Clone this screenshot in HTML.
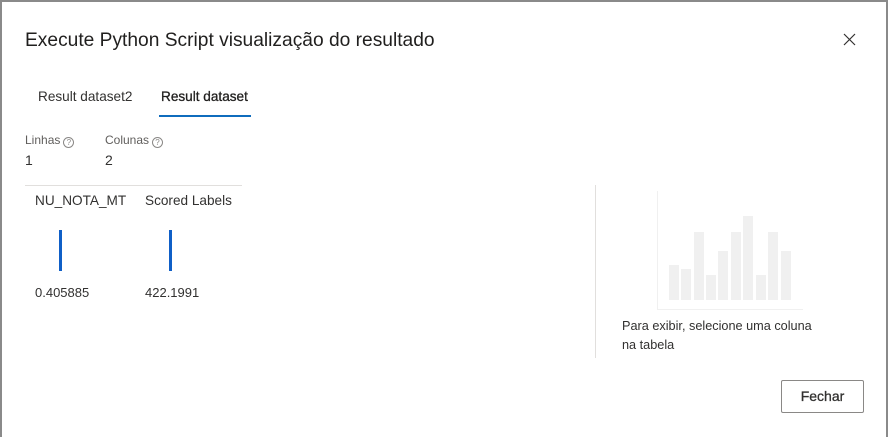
<!DOCTYPE html>
<html><head><meta charset="utf-8"><style>
*{margin:0;padding:0;box-sizing:border-box}
body{width:888px;height:437px;background:#fff;position:relative;overflow:hidden;font-family:"Segoe UI","Liberation Sans",sans-serif;color:#323130}
.a{position:absolute;white-space:nowrap}
.q{display:inline-block;width:11px;height:11px;border:1px solid #8a8886;border-radius:50%;font-size:8px;line-height:9px;text-align:center;color:#8a8886;vertical-align:-1px;margin-left:3px}
.bar{position:absolute;background:#f0f0f0;width:10px}
</style></head><body>
<div class="a" style="left:0;top:0;width:888px;height:2px;background:#8a8a8a"></div>
<div class="a" style="left:0;top:0;width:2px;height:437px;background:#8a8a8a"></div>
<div class="a" style="left:886px;top:0;width:2px;height:437px;background:#8a8a8a"></div>
<div class="a" style="left:25px;top:30px;font-size:19.2px;color:#201f1e">Execute Python Script visualização do resultado</div>
<svg class="a" style="left:843px;top:33px" width="13" height="13" viewBox="0 0 13 13"><path d="M1 1L12 12M12 1L1 12" stroke="#323130" stroke-width="1.2"/></svg>
<div class="a" style="left:38px;top:89px;font-size:13.6px">Result dataset2</div>
<div class="a" style="left:161px;top:89px;font-size:13.6px;color:#201f1e;-webkit-text-stroke:0.3px #201f1e">Result dataset</div>
<div class="a" style="left:159px;top:115px;width:92px;height:2px;background:#0f6cbd"></div>
<div class="a" style="left:25px;top:133px;font-size:12px;color:#605e5c">Linhas<span class="q">?</span></div>
<div class="a" style="left:105px;top:133px;font-size:12px;color:#605e5c">Colunas<span class="q">?</span></div>
<div class="a" style="left:25px;top:152px;font-size:14px">1</div>
<div class="a" style="left:105px;top:152px;font-size:14px">2</div>
<div class="a" style="left:25px;top:185px;width:217px;height:1px;background:#e1dfdd"></div>
<div class="a" style="left:35px;top:193px;font-size:13.6px">NU_NOTA_MT</div>
<div class="a" style="left:145px;top:193px;font-size:13.6px">Scored Labels</div>
<div class="a" style="left:59px;top:230px;width:3px;height:41px;background:#0f5fc7"></div>
<div class="a" style="left:169px;top:230px;width:3px;height:41px;background:#0f5fc7"></div>
<div class="a" style="left:35px;top:285px;font-size:13px">0.405885</div>
<div class="a" style="left:145px;top:285px;font-size:13px">422.1991</div>
<div class="a" style="left:595px;top:185px;width:1px;height:173px;background:#e1dfdd"></div>
<div class="a" style="left:657px;top:191px;width:1px;height:119px;background:#f0f0f0"></div>
<div class="a" style="left:657px;top:309px;width:146px;height:1px;background:#f0f0f0"></div>
<div class="bar" style="left:669px;top:265px;height:35px"></div>
<div class="bar" style="left:681px;top:269px;height:31px"></div>
<div class="bar" style="left:694px;top:232px;height:68px"></div>
<div class="bar" style="left:706px;top:275px;height:25px"></div>
<div class="bar" style="left:718px;top:251px;height:49px"></div>
<div class="bar" style="left:731px;top:232px;height:68px"></div>
<div class="bar" style="left:743px;top:216px;height:84px"></div>
<div class="bar" style="left:756px;top:275px;height:25px"></div>
<div class="bar" style="left:768px;top:232px;height:68px"></div>
<div class="bar" style="left:781px;top:251px;height:49px"></div>
<div class="a" style="left:622px;top:317px;font-size:12.7px;line-height:19px">Para exibir, selecione uma coluna<br>na tabela</div>
<div class="a" style="left:781px;top:380px;width:83px;height:33px;border:1px solid #8a8886;border-radius:2px;font-size:14px;text-align:center;line-height:31px;-webkit-text-stroke:0.3px #323130">Fechar</div>
</body></html>
